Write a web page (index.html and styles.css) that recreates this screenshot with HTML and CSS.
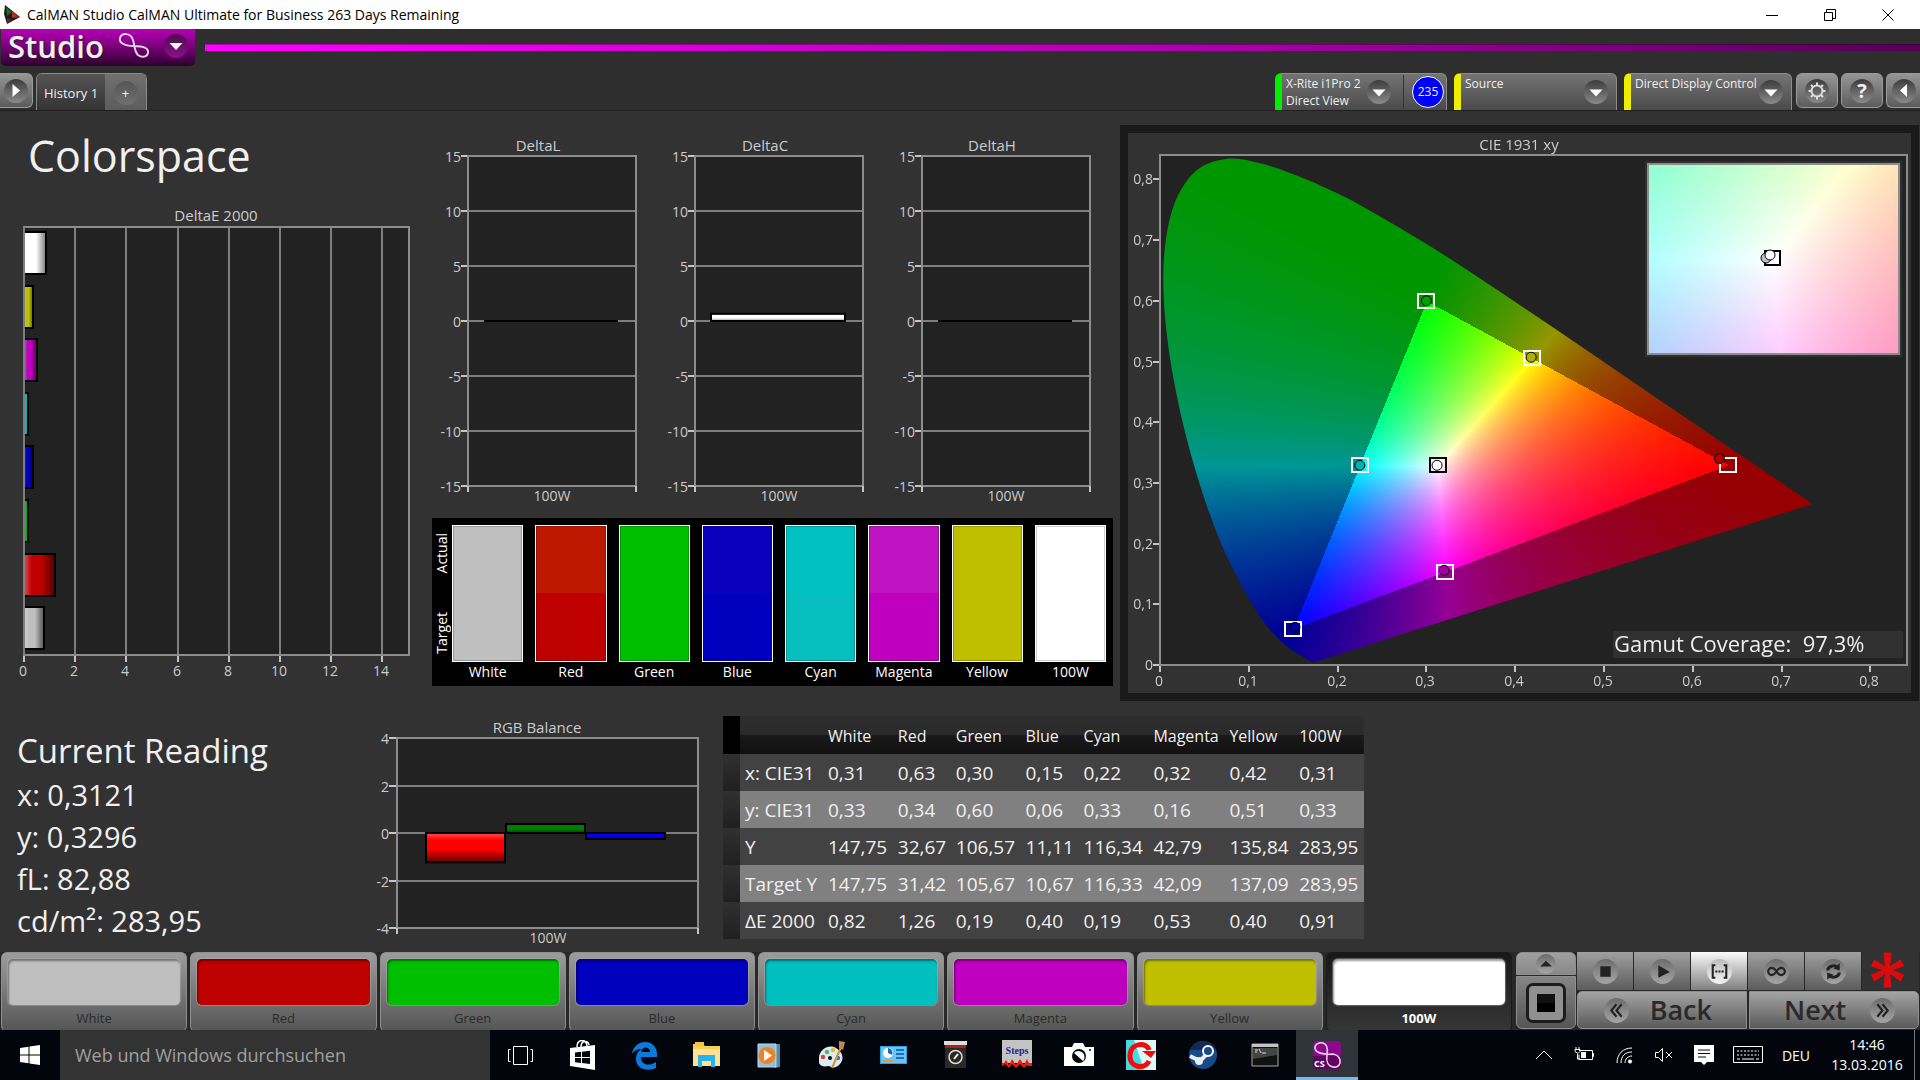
FILE: index.html
```html
<!DOCTYPE html>
<html lang="de">
<head>
  <meta charset="UTF-8">
  <meta name="viewport" content="width=device-width, initial-scale=1.0">
  <title>CalMAN Studio</title>
  <link rel="stylesheet" href="styles.css">
</head>
<body>
  <header class="titlebar">
    <svg class="app-icon" viewBox="0 0 18 20">
      <path d="M2 0 17 12 4 19 1 9z" fill="#1b1b1b"/>
      <path d="M3 2 9 7 4 11z" fill="#1d6b1d"/>
      <path d="M9 6 16 12 9 13z" fill="#c3261b"/>
      <path d="M4 13 9 15 4 18z" fill="#7c1c2c"/>
    </svg>
    <span class="caption">CalMAN Studio CalMAN Ultimate for Business 263 Days Remaining</span>
    <button class="win-btn" aria-label="Minimieren"><svg viewBox="0 0 12 12"><path d="M0 6.5h12"/></svg></button>
    <button class="win-btn" aria-label="Verkleinern"><svg viewBox="0 0 12 12"><path d="M.5 3.5h8v8h-8zM2.5 3.500v-3h9v9h-3"/></svg></button>
    <button class="win-btn" aria-label="Schließen"><svg viewBox="0 0 12 12"><path d="M.5.5l11 11M11.500.5l-11 11"/></svg></button>
  </header>

  <div class="brand-row">
    <button class="brand">
      <span>Studio</span>
      <svg class="brand-mark" viewBox="0 0 32 28"><path d="M16 14C5 14 1 10 2 6 4 0 13 1 15 8c2 6 1 11 5 15 4 3 9 2 10-2 1-5-5-7-14-7" /></svg>
      <svg class="round violet" viewBox="0 0 24 24"><path d="M5.500 9h13L12 16z"/></svg>
    </button>
    <div class="brand-line"></div>
  </div>

  <nav class="tab-row">
    <button class="edge-btn left" aria-label="Öffnen"><svg class="round" viewBox="0 0 24 24"><path d="M8.500 5 16 11.500 8.500 18z"/></svg></button>
    <div class="tabs">
      <button class="tab active">History 1</button>
      <button class="tab add" aria-label="Neu"><span>+</span></button>
    </div>
    <div class="spacer"></div>
    <div class="device meter">
      <button class="device-name">X-Rite i1Pro 2<br>Direct View</button>
      <svg class="round arrow" viewBox="0 0 24 24"><path d="M5.500 9.500h13L12 16.500z"/></svg>
      <button class="level"><span>235</span></button>
    </div>
    <div class="device source">
      <select class="device-name" aria-label="Source"><option>Source</option></select>
      <svg class="round arrow" viewBox="0 0 24 24"><path d="M5.500 9.500h13L12 16.500z"/></svg>
    </div>
    <div class="device display">
      <select class="device-name" aria-label="Display"><option>Direct Display Control</option></select>
      <svg class="round arrow" viewBox="0 0 24 24"><path d="M5.500 9.500h13L12 16.500z"/></svg>
    </div>
    <button class="edge-btn" aria-label="Einstellungen"><svg class="round gear" viewBox="0 0 24 24"><circle cx="12" cy="12" r="5.500"/><path d="M12 3.500v3M12 17.500v3M3.500 12h3M17.500 12h3M6 6l2 2M16 16l2 2M18 6l-2 2M8 16l-2 2"/></svg></button>
    <button class="edge-btn" aria-label="Hilfe"><span class="help">?</span></button>
    <button class="edge-btn right" aria-label="Einblenden"><svg class="round" viewBox="0 0 24 24"><path d="M15 5 8 11.500 15 18z"/></svg></button>
  </nav>

  <main class="work">
    <div class="top">
      <section class="col-left">
        <h1>Colorspace</h1>
        <svg class="chart" id="deltaE" viewBox="0 0 432 485"></svg>
      </section>
      <section class="col-mid">
        <div class="deltas">
          <svg class="chart delta" data-title="DeltaL" data-value="0" viewBox="0 0 227 388"></svg>
          <svg class="chart delta" data-title="DeltaC" data-value="0.65" viewBox="0 0 227 388"></svg>
          <svg class="chart delta" data-title="DeltaH" data-value="0" viewBox="0 0 227 388"></svg>
        </div>
        <div class="compare">
          <div class="side"><span>Actual</span><span>Target</span></div>
          <div class="patch"><div class="pair white"></div>White</div>
          <div class="patch"><div class="pair red"></div>Red</div>
          <div class="patch"><div class="pair green"></div>Green</div>
          <div class="patch"><div class="pair blue"></div>Blue</div>
          <div class="patch"><div class="pair cyan"></div>Cyan</div>
          <div class="patch"><div class="pair magenta"></div>Magenta</div>
          <div class="patch"><div class="pair yellow"></div>Yellow</div>
          <div class="patch"><div class="pair full"></div>100W</div>
        </div>
      </section>
      <section class="cie">
        <canvas id="gamut" width="783" height="560"></canvas>
        <svg class="chart" id="cie" viewBox="0 0 783 560"></svg>
      </section>
    </div>

    <div class="bottom">
      <section class="reading">
        <h2>Current Reading</h2>
        <p>x: 0,3121</p>
        <p>y: 0,3296</p>
        <p>fL: 82,88</p>
        <p>cd/m²: 283,95</p>
      </section>
      <svg class="chart" id="rgb" viewBox="0 0 340 234"></svg>
      <section class="values">
        <table>
          <thead>
            <tr><td class="grip"></td><td class="name"></td><th>White</th><th class="narrow">Red</th><th>Green</th><th class="narrow">Blue</th><th>Cyan</th><th class="wide">Magenta</th><th>Yellow</th><th>100W</th></tr>
          </thead>
          <tbody>
            <tr><td class="grip"></td><th>x: CIE31</th><td>0,31</td><td>0,63</td><td>0,30</td><td>0,15</td><td>0,22</td><td>0,32</td><td>0,42</td><td>0,31</td></tr>
            <tr><td class="grip"></td><th>y: CIE31</th><td>0,33</td><td>0,34</td><td>0,60</td><td>0,06</td><td>0,33</td><td>0,16</td><td>0,51</td><td>0,33</td></tr>
            <tr><td class="grip"></td><th>Y</th><td>147,75</td><td>32,67</td><td>106,57</td><td>11,11</td><td>116,34</td><td>42,79</td><td>135,84</td><td>283,95</td></tr>
            <tr><td class="grip"></td><th>Target Y</th><td>147,75</td><td>31,42</td><td>105,67</td><td>10,67</td><td>116,33</td><td>42,09</td><td>137,09</td><td>283,95</td></tr>
            <tr><td class="grip"></td><th>ΔE 2000</th><td>0,82</td><td>1,26</td><td>0,19</td><td>0,40</td><td>0,19</td><td>0,53</td><td>0,40</td><td>0,91</td></tr>
          </tbody>
        </table>
      </section>
    </div>
  </main>

  <div class="dock">
    <div class="colors">
      <button class="color"><span class="well white"></span>White</button>
      <button class="color"><span class="well red"></span>Red</button>
      <button class="color"><span class="well green"></span>Green</button>
      <button class="color"><span class="well blue"></span>Blue</button>
      <button class="color"><span class="well cyan"></span>Cyan</button>
      <button class="color"><span class="well magenta"></span>Magenta</button>
      <button class="color"><span class="well yellow"></span>Yellow</button>
      <button class="color active"><span class="well full"></span>100W</button>
    </div>
    <div class="pattern">
      <button class="up" aria-label="Auf"><svg class="disc" viewBox="0 0 24 24"><path d="M5 15h14L12 8z"/></svg></button>
      <button class="window" aria-label="Fenster"><span></span></button>
    </div>
    <div class="controls">
      <div class="transport">
        <button aria-label="Stopp"><svg class="disc" viewBox="0 0 24 24"><path d="M7 7h10v10H7z"/></svg></button>
        <button aria-label="Start"><svg class="disc" viewBox="0 0 24 24"><path d="M8 6 19 12.500 8 18z"/></svg></button>
        <button class="active" aria-label="Serie"><svg class="disc" viewBox="0 0 24 24"><path class="stroke" d="M8 6H5.500v12H8M16 6h2.500v12H16"/><path d="M8 11h2v2H8zM11 11h2v2h-2zM14 11h2v2h-2z"/></svg></button>
        <button aria-label="Endlos"><svg class="disc" viewBox="0 0 24 24"><path class="stroke" d="M12 12c-2-3-3-3.500-4.500-3.500a3.500 3.500 0 0 0 0 7C9 15.500 10 15 12 12s3-3.500 4.500-3.500a3.500 3.500 0 0 1 0 7C15 15.500 14 15 12 12z"/></svg></button>
        <button aria-label="Aktualisieren"><svg class="disc" viewBox="0 0 24 24"><path class="stroke thick" d="M6.500 11c0-4 6-6 9.500-3M17.500 13c0 4-6 6-9.500 3"/><path d="M18 4v7l-6-2zM6 20v-7l6 2z"/></svg></button>
        <svg class="star" viewBox="0 0 34 38"><path d="M13.500 1h7L19 15l11-7 3 6-12 4 12 5-3 6-11-8 1.500 14h-7L15 21 4 29l-3-6 12-5L1 14l3-6 11 7z"/></svg>
      </div>
      <div class="steps">
        <button><svg class="disc" viewBox="0 0 24 24"><path class="stroke" d="M12 6 7 12l5 6M17 6l-5 6 5 6"/></svg>Back</button>
        <button>Next<svg class="disc" viewBox="0 0 24 24"><path class="stroke" d="M7 6l5 6-5 6M12 6l5 6-5 6"/></svg></button>
      </div>
    </div>
  </div>

  <footer class="taskbar">
    <button class="start" aria-label="Start"><svg viewBox="0 0 20 20"><path d="M0 3 8.500 1.800V9.500H0zM9.500 1.600 20 0v9.500H9.500zM0 10.500h8.500v7.700L0 17zM9.500 10.500H20V20L9.500 18.400z" fill="#fff"/></svg></button>
    <input class="search" type="text" aria-label="Suche" placeholder="Web und Windows durchsuchen">
    <div class="apps">
      <button aria-label="Taskansicht"><svg viewBox="0 0 30 30"><path d="M7.500 6.500h14v18h-14zM4.500 9.500h-2v12h2M24.500 9.500h2v12h-2" fill="none" stroke="#fff"/></svg></button>
      <button aria-label="Store"><svg viewBox="0 0 30 30"><path d="M2 8 27 5v25L2 26z" fill="#fff"/><path d="M9 7c0-8 9-9 10-1M13 7c0-7 7-7 8-2" fill="none" stroke="#fff" stroke-width="1.500"/><path d="M7 12.500l6-.7V17H7zM14 11.700l8-1V17h-8zM7 18h6v5l-6-.7zM14 18h8v6l-8-1z" fill="#05070c"/></svg></button>
      <button aria-label="Edge"><svg viewBox="0 0 30 30"><path d="M2 14C3 6 9 2 15 2c8 0 12 6 12 12v3H11c0 9 9 9 15 5v6c-9 4-20 1-20-9 0-5 2-8 6-10-5 0-8 2-10 5zM11 12h9c0-6-8-6-9 0z" fill="#0a7bdc"/></svg></button>
      <button aria-label="Explorer"><svg viewBox="0 0 30 30"><path d="M1 4h10l2 2h15v20H1z" fill="#f7cf55"/><path d="M1 9h27v17H1z" fill="#ffe293"/><path d="M3 2h9v4H3z" fill="#f4c23e"/><path d="M6 27V15h17v12h-4v-6h-9v6z" fill="#27b3ec"/></svg></button>
      <button aria-label="Media Player"><svg viewBox="0 0 30 30"><path d="M9 4h17v23l-5 1V6z" fill="#4f8aa8"/><path d="M4 4h18v23H4z" fill="#8fc0dc"/><path d="M4 4h18v23H4z" fill="none" stroke="#b9dcec"/><circle cx="13" cy="15.500" r="8.500" fill="#f08020"/><path d="M10 10l8 5.500-8 5.500z" fill="#fff"/></svg></button>
      <button aria-label="Paint"><svg viewBox="0 0 30 30"><path d="M3 17C4 9 13 4 20 8s9 12 3 17-9 1-10 1-8 2-10-3z" fill="#d8ebf6"/><circle cx="7" cy="17" r="2.200" fill="#d9482b"/><circle cx="11" cy="12" r="2.200" fill="#63b545"/><circle cx="17" cy="10" r="2.200" fill="#efb62c"/><circle cx="22" cy="18" r="2.200" fill="#3a77cf"/><circle cx="14" cy="18" r="2" fill="#0a1220"/><path d="M26 5 16 28" stroke="#e28b2d" stroke-width="2"/><path d="M23 1l6 1-2 8-4-2z" fill="#b98a5c"/></svg></button>
      <button aria-label="Systemsteuerung"><svg viewBox="0 0 30 30"><path d="M2 6h27v18H2z" fill="#2e9fe6"/><path d="M3 7h25v16H3z" fill="#6cc4f5"/><circle cx="10" cy="13" r="5" fill="#fff"/><path d="M10 13V8a5 5 0 0 1 4 7z" fill="#1d66b8"/><path d="M18 9h8v2h-8zM18 13h8v2h-8zM18 17h8v2h-8z" fill="#1970bd"/><path d="M5 20h10v2H5z" fill="#f09a26"/></svg></button>
      <button aria-label="Messgerät"><svg viewBox="0 0 30 30"><path d="M4 1h23v4H4z" fill="#ddd"/><path d="M5 5h21v3H5z" fill="#aa2020"/><path d="M5 8h21v20H5z" fill="#2c2826"/><circle cx="15.500" cy="17" r="6.500" fill="none" stroke="#ddd" stroke-width="1.500"/><path d="M14 19l4-5" stroke="#fff" stroke-width="2"/></svg></button>
      <button aria-label="Steps"><svg viewBox="0 0 30 30"><path d="M0 0h30v30H0z" fill="#c3c3c3"/><path d="M0 23h30v7H0z"/><path d="M0 23h2l2-3 3 5 3-6 4 6 4-6 4 6 3-6 2 4h3v3h-4l-1-1-3 3-4-4-4 4-4-4-3 4-4-4-2 2H0z" fill="#f21d0c"/><text x="15" y="14" text-anchor="middle" class="steps-text">Steps</text></svg></button>
      <button aria-label="Kamera"><svg viewBox="0 0 30 30"><path d="M0 7h8l2-4h9l2 4h9v19H0z" fill="#fff"/><ellipse cx="15" cy="16" rx="7" ry="7" fill="#05070c"/><path d="M10 13a6 6 0 0 1 9 8z" fill="#fff"/><circle cx="26" cy="10" r="1" fill="#05070c"/></svg></button>
      <button aria-label="Capture"><svg viewBox="0 0 30 30"><path d="M0 0h30v30H0z" fill="#48d8e0"/><path d="M8 0h22v30H18z" fill="#dff8f8"/><path d="M23 10C21 2 5 2 4 15s15 15 19 6" fill="none" stroke="#f20d0d" stroke-width="5"/><path d="M16 11h14l-5 7z" fill="#f20d0d"/></svg></button>
      <button aria-label="Steam"><svg viewBox="0 0 30 30"><circle cx="15" cy="15" r="14" fill="#174a86"/><path d="M2 10a14 14 0 0 1 26 0z" fill="#152a52"/><path d="M2 16l10 5 8-8" fill="none" stroke="#e9eef5" stroke-width="4"/><circle cx="20" cy="11" r="5" fill="#174a86" stroke="#fff" stroke-width="2"/><circle cx="11" cy="21" r="4" fill="#e9eef5"/></svg></button>
      <button aria-label="Eingabeaufforderung"><svg viewBox="0 0 30 30"><path d="M2 4h26v22H2z" fill="#111" stroke="#aaa"/><path d="M2 4h26v3H2z" fill="#c4c4c4"/><path d="M3 8h24v7L3 19z" fill="#444"/><path d="M5 10h3M5 12h2M9 9l2 4M12 13h4" stroke="#ddd"/></svg></button>
      <button class="active" aria-label="CalMAN"><svg viewBox="0 0 30 30"><rect x="1" y="1" width="28" height="28" rx="4" fill="#8b0a8b"/><path d="M1 16h28v9a4 4 0 0 1-4 4H5a4 4 0 0 1-4-4z" fill="#5f055f"/><path d="M22 14C9 15 3 12 3 8s4-6 8-5 5 6 4 12 1 11 6 12 8-3 7-7-5-6-9-6" fill="none" stroke="#f0d0f0" stroke-width="1.600"/><text x="2" y="27" class="cs-text">CS</text></svg></button>
    </div>
    <div class="tray">
      <button aria-label="Weitere Symbole"><svg viewBox="0 0 20 20"><path d="M2 14 10 6l8 8"/></svg></button>
      <button aria-label="Akku"><svg viewBox="0 0 20 20"><path d="M5 5.500h13.500v9H5v-5M18.500 8.500h1v3h-1M1 4.500h5v2l-2 2-3-2zM2 2v2M5 2v2M3.500 9v5H6"/><path d="M7 7h5v6H7z" fill="#fff" stroke="none"/></svg></button>
      <button aria-label="Netzwerk"><svg viewBox="0 0 20 20"><path d="M3 18C3 9 9 3 18 3M7 18C7 11 11 7 18 7M11 18c0-4 3-7 7-7" /><circle cx="16" cy="16.500" r="1.600" fill="#fff"/></svg></button>
      <button aria-label="Lautstärke"><svg viewBox="0 0 20 20"><path d="M1.500 7.500h3l4-4v13l-4-4h-3zM12 7l6 6M18 7l-6 6"/></svg></button>
      <button aria-label="Info"><svg viewBox="0 0 20 20"><path d="M0 0h20v17h-7l-3 3-3-3H0z" fill="#fff" stroke="none"/><path d="M4 5h12M4 8.500h12M4 12h8" stroke="#05070c"/></svg></button>
      <button class="keyboard" aria-label="Tastatur"><svg viewBox="0 0 30 18"><path d="M.5.5h29v16H.5z"/><path d="M4 5h22M4 9h22" stroke-dasharray="2 1.500"/><path d="M4 13h3M9 13h12M23 13h3"/></svg></button>
      <button class="lang">DEU</button>
      <button class="clock">14:46<br>13.03.2016</button>
    </div>
  </footer>

  <script src="script.js"></script>
</body>
</html>
```
FILE: styles.css
```css
* {
  box-sizing: border-box;
}
body {
  margin: 0;
  min-height: 100vh;
  display: flex;
  flex-direction: column;
  background: #2e2e2e;
  color: #f0f0f0;
  font-family: "Open Sans", "Noto Sans", sans-serif;
  font-size: 14px;
  overflow-x: hidden;
}
button, select, input {
  font: inherit;
  color: inherit;
  border: 0;
  padding: 0;
  margin: 0;
  background: none;
}
svg {
  display: block;
}
h1, h2, p {
  margin: 0;
  font-weight: 400;
}

/* title bar */
.titlebar {
  height: 29px;
  padding-right: 3px;
  display: flex;
  align-items: center;
  background: #fff;
  color: #000;
}
.app-icon {
  width: 18px;
  height: 20px;
  margin: 0 6px 0 3px;
}
.caption {
  flex: 1;
  font-size: 14px;
}
.win-btn {
  width: 58px;
  height: 29px;
  display: grid;
  place-items: center;
}
.win-btn svg {
  width: 12px;
  height: 12px;
  fill: none;
  stroke: #000;
}

/* brand */
.brand-row {
  height: 44px;
  display: flex;
  align-items: flex-start;
}
.brand {
  width: 194px;
  height: 37px;
  margin-left: 1px;
  padding: 0 7px 3px;
  display: flex;
  align-items: center;
  justify-content: space-between;
  border-radius: 0 0 5px 5px;
  background: linear-gradient(#b400b4, #8c008c 35%, #2c002c);
  font-size: 31px;
  font-weight: 600;
  line-height: 34px;
  text-shadow: 1px 1px 2px #222;
}
.brand-mark {
  width: 32px;
  height: 28px;
  fill: none;
  stroke: #e4d4e4;
  stroke-width: 2;
}
.brand-line {
  flex: 1;
  height: 7px;
  margin: 15px 0 0 10px;
  background: linear-gradient(90deg, #ff00ff, #a800a8 60%, #550055);
  border-top: 1px solid rgba(0, 0, 0, .3);
}
.round {
  width: 24px;
  height: 24px;
  border-radius: 50%;
  background: linear-gradient(#3c3c3c, #8a8a8a);
  fill: #fff;
}
.round.violet {
  background: linear-gradient(#4a0c4a, #8f0f8f);
}

/* tabs and devices */
.tab-row {
  height: 38px;
  display: flex;
  align-items: flex-start;
  gap: 3px;
  border-bottom: 1px solid #202020;
}
.edge-btn {
  width: 42px;
  height: 35px;
  display: grid;
  place-items: center;
  border: 1px solid #9a9a9a;
  border-radius: 6px;
  background: linear-gradient(#969696, #5c5c5c);
}
.edge-btn.left {
  width: 33px;
  border-left: 0;
  border-radius: 0 6px 6px 0;
}
.edge-btn.right {
  width: 34px;
  border-right: 0;
  border-radius: 6px 0 0 6px;
}
.round.gear {
  fill: none;
  stroke: #ddd;
  stroke-width: 2;
}
.help {
  width: 24px;
  height: 24px;
  border-radius: 50%;
  background: linear-gradient(#3c3c3c, #8a8a8a);
  font-size: 20px;
  font-weight: 700;
  line-height: 24px;
}
.tabs {
  display: flex;
  height: 37px;
  border: 1px solid #8a8a8a;
  border-bottom: 0;
  border-radius: 6px 6px 0 0;
  overflow: hidden;
}
.tab {
  width: 68px;
  padding-top: 2px;
  font-size: 13px;
  background: linear-gradient(#555, #333);
}
.tab.add {
  width: 41px;
  display: grid;
  place-items: center;
  background: linear-gradient(#707070, #5c5c5c);
}
.tab.add span {
  width: 24px;
  height: 24px;
  line-height: 24px;
  border-radius: 50%;
  background: linear-gradient(#555, #707070);
}
.spacer {
  flex: 1;
}
.device {
  height: 37px;
  width: 163px;
  margin-right: 4px;
  display: flex;
  align-items: center;
  border: 1px solid #8c8c8c;
  border-left: 7px solid #ee0;
  border-bottom: 0;
  border-radius: 6px 6px 0 0;
  background: linear-gradient(#747474, #4a4a4a);
  font-size: 12px;
}
.device.meter {
  width: 172px;
  border-left-color: #0e0;
}
.device.display {
  width: 168px;
  margin-right: 1px;
}
.device-name {
  flex: 1;
  align-self: stretch;
  min-width: 0;
  padding: 0 0 0 4px;
  line-height: 17px;
  text-align: left;
  appearance: none;
}
select.device-name {
  padding: 0 0 17px 4px;
}
.device .arrow {
  margin-right: 8px;
  flex: none;
}
.device.meter .arrow {
  margin-right: 12px;
}
.level {
  height: 34px;
  padding: 0 2px 0 8px;
  border-left: 1px solid #333;
}
.level span {
  display: block;
  width: 32px;
  height: 32px;
  line-height: 29px;
  border: 1px solid #fff;
  border-radius: 50%;
  background: #00f;
}

/* workspace */
.work {
  flex: 1;
  display: flex;
  flex-direction: column;
  background: #323232;
}
.top {
  display: grid;
  grid-template-columns: 432fr 681fr 807fr;
  align-items: start;
}
h1 {
  padding: 15px 0 19px 28px;
  font-size: 43px;
  line-height: 60px;
}
.chart {
  width: 100%;
  height: auto;
}
.deltas {
  display: grid;
  grid-template-columns: repeat(3, 1fr);
  margin-top: 19px;
}
.frame {
  fill: #222;
  stroke: #8c8c8c;
  stroke-width: 2;
}
.frame.clear {
  fill: none;
}
.grid-line {
  stroke: #7e7e7e;
  stroke-width: 2;
}
.tick {
  stroke: #c4c4c4;
  stroke-width: 2;
}
.frame, .grid-line, .tick {
  shape-rendering: crispEdges;
}
.bar {
  stroke: #000;
  stroke-width: 2;
}
.label, .title {
  fill: #ccc;
  font-size: 14px;
}
.title {
  font-size: 15px;
}
.target {
  fill: none;
  stroke: #fff;
  stroke-width: 2;
}
.target.dark {
  stroke: #000;
}
.measured {
  stroke: #000;
  stroke-width: 1;
}
.coverage {
  fill: #eee;
  font-size: 22px;
}

.compare {
  display: grid;
  grid-template-columns: 8px repeat(8, 1fr);
  gap: 12px;
  padding: 7px 7px 5px 0;
  background: #000;
  color: #fff;
}
.side {
  width: 20px;
  height: 137px;
  padding: 8px 0;
  display: flex;
  flex-direction: column;
  justify-content: space-between;
  align-items: center;
}
.side span {
  writing-mode: vertical-rl;
  transform: rotate(180deg);
  line-height: 20px;
}
.patch {
  text-align: center;
  line-height: 19px;
}
.pair {
  height: 137px;
  border: 1px solid #fff;
  outline: 1px solid rgba(0, 0, 0, .2);
  outline-offset: -2px;
}
.white { background: #bfbfbf; }
.red { background: #bf0000; }
.green { background: #00bf00; }
.blue { background: #0000bf; }
.cyan { background: #00bfbf; }
.magenta { background: #bf00bf; }
.yellow { background: #bfbf00; }
.full { background: #fff; }
.pair.white { background: linear-gradient(#bebfbe 50%, #bfbfbf 50%); }
.pair.red { background: linear-gradient(#bf1800 50%, #bf0000 50%); }
.pair.blue { background: linear-gradient(#0c00bf 50%, #0000bf 50%); }
.pair.cyan { background: linear-gradient(#00c0c0 50%, #08bfc0 50%); }
.pair.magenta { background: linear-gradient(#bf12c0 50%, #bf00bf 50%); }

.cie {
  margin: 14px 1px 0 7px;
  display: grid;
  border: 8px solid #1a1a1a;
}
.cie canvas, .cie svg {
  grid-area: 1 / 1;
  width: 100%;
  height: auto;
}

.bottom {
  display: grid;
  grid-template-columns: 370fr 340fr 1210fr;
  align-items: start;
}
.bottom .chart {
  margin-top: 17px;
}
.reading {
  padding: 26px 0 0 17px;
}
.reading h2 {
  font-size: 33px;
  line-height: 47px;
}
.reading p {
  font-size: 29px;
  line-height: 42px;
}
.values {
  padding: 15px 0 0 13px;
}
table {
  table-layout: fixed;
  border-collapse: collapse;
  width: 641px;
}
th, td {
  padding: 0 0 0 5px;
  height: 37px;
  font-weight: 400;
  font-size: 19px;
  line-height: 24px;
  text-align: left;
  white-space: nowrap;
}
thead tr {
  background: linear-gradient(#2e2e2e, #2a2a2a 50%, #191919 50%, #111);
}
thead th {
  height: 38px;
  padding-top: 2px;
  font-size: 16px;
}
.grip {
  width: 17px;
  padding: 0;
  background: linear-gradient(#303030, #202020);
}
thead .grip {
  background: #000;
}
.name {
  width: 83px;
}
.narrow {
  width: 58px;
}
.wide {
  width: 76px;
}
tbody tr {
  background: #424242;
}
tbody tr:nth-child(even) {
  background: #808080;
}

/* pattern dock */
.dock {
  height: 78px;
  display: flex;
  gap: 1px;
  padding-right: 1px;
  background: #282828;
  color: #2a2a2a;
}
.colors {
  flex: 1;
  display: grid;
  grid-template-columns: repeat(8, 1fr);
  gap: 3px;
  padding: 0 3px 1px 1px;
}
.color {
  padding: 6px 6px 0;
  border: 1px solid #8f8f8f;
  border-bottom-color: #444;
  border-radius: 6px;
  background: linear-gradient(#9c9c9c, #555);
  font-size: 13px;
  display: flex;
  flex-direction: column;
  align-items: center;
  line-height: 26px;
}
.color.active {
  border-color: #1a1a1a;
  background: linear-gradient(#181818, #363636);
  color: #fff;
  font-weight: 700;
}
.well {
  align-self: stretch;
  height: 46px;
  border-radius: 5px;
  box-shadow: inset 1px 2px 2px rgba(0, 0, 0, .4), 0 0 1px 1px rgba(190, 190, 190, .4);
}
.pattern {
  width: 60px;
  display: flex;
  flex-direction: column;
  gap: 1px;
  padding-bottom: 1px;
}
.up, .window {
  display: grid;
  place-items: center;
  border: 1px solid #8f8f8f;
}
.up {
  height: 23px;
  border-radius: 6px 6px 0 0;
  background: linear-gradient(#a0a0a0, #888);
}
.up .disc {
  width: 20px;
  height: 20px;
}
.window {
  flex: 1;
  border-radius: 0 0 6px 6px;
  background: linear-gradient(#858585, #555);
}
.window span {
  width: 40px;
  height: 40px;
  border: 3px solid #1c1c1c;
  border-radius: 7px;
  background: linear-gradient(#111 50%, #000 50%) center / 18px 18px no-repeat, #909090;
}
.disc {
  width: 25px;
  height: 25px;
  border-radius: 50%;
  background: linear-gradient(#6c6c6c, #a6a6a6);
  fill: #222;
}
.stroke {
  fill: none;
  stroke: #222;
  stroke-width: 2;
}
.stroke.thick {
  stroke-width: 3;
}
.controls {
  width: 342px;
  display: flex;
  flex-direction: column;
  gap: 1px;
  padding-bottom: 1px;
}
.transport {
  height: 38px;
  display: flex;
  gap: 1px;
}
.transport button {
  width: 56px;
  display: grid;
  place-items: center;
  background: linear-gradient(#a0a0a0, #5c5c5c);
}
.transport .active {
  background: linear-gradient(#fafafa, #808080);
}
.transport .active .disc {
  background: linear-gradient(#bbb, #f4f4f4);
}
.star {
  flex: 1;
  height: 38px;
  padding-right: 6px;
  fill: #dc0a0a;
  stroke: #dc0a0a;
  background: #323232;
}
.steps {
  flex: 1;
  display: grid;
  grid-template-columns: 1fr 1fr;
  gap: 2px;
}
.steps button {
  display: flex;
  align-items: center;
  justify-content: space-between;
  padding: 0 34px 0 26px;
  border: 1px solid #8f8f8f;
  border-radius: 5px 0 0 5px;
  background: linear-gradient(#a4a4a4, #5a5a5a);
  font-size: 27px;
  font-weight: 600;
  line-height: 34px;
}
.steps button:last-child {
  padding: 0 23px 0 34px;
  border-radius: 0 5px 5px 0;
}

/* taskbar */
.taskbar {
  height: 50px;
  display: flex;
  background: #02050b;
  color: #fff;
}
.start {
  width: 60px;
  display: grid;
  place-items: center;
}
.start svg {
  width: 20px;
  height: 20px;
}
.search {
  width: 430px;
  padding: 0 15px;
  background: #333;
  font-size: 18px;
}
.search::placeholder {
  color: #a0a0a0;
  opacity: 1;
}
.apps {
  flex: 1;
  display: flex;
}
.apps button {
  width: 62px;
  display: grid;
  place-items: center;
}
.apps svg {
  width: 30px;
  height: 30px;
}
.apps .active {
  background: #2f3439;
  border-bottom: 3px solid #76b9ed;
  padding-top: 3px;
}
.steps-text {
  font: 700 10px "Liberation Serif", serif;
  fill: #2020a0;
}
.cs-text {
  font-size: 9px;
  font-weight: 700;
  fill: #fff;
}
.tray {
  display: flex;
  margin-right: 5px;
  border-right: 1px solid #777;
}
.tray button {
  width: 40px;
  display: grid;
  place-items: center;
}
.tray svg {
  width: 20px;
  height: 20px;
  fill: none;
  stroke: #fff;
  stroke-width: 1;
}
.tray .keyboard {
  width: 48px;
}
.tray .keyboard svg {
  width: 30px;
  height: 18px;
}
.tray .lang {
  width: 48px;
}
.tray .clock {
  width: 94px;
  line-height: 20px;
}
```
FILE: script.js
```js
const $ = s => document.querySelector(s)
const $$ = s => document.querySelectorAll(s)
const NS = 'http://www.w3.org/2000/svg'

function add(parent, tag, attrs, text) {
  const node = document.createElementNS(NS, tag)
  for (const key in attrs) node.setAttribute(key, attrs[key])
  if (text !== undefined) node.textContent = text
  parent.appendChild(node)
  return node
}
function line(svg, cls, x1, y1, x2, y2) {
  add(svg, 'line', { class: cls, x1, y1, x2, y2 })
}
function label(svg, x, y, text, anchor = 'middle', cls = 'label') {
  add(svg, 'text', { class: cls, x, y, 'text-anchor': anchor }, text)
}
function frame(svg, x, y, width, height, cls = 'frame') {
  add(svg, 'rect', { class: cls, x, y, width, height })
}
// bar shading: light edge, flat colour, dark edge
function shade(svg, id, mid, light, dark, vertical) {
  const g = add(svg, 'linearGradient', vertical ? { id, x2: 0, y2: 1 } : { id })
  add(g, 'stop', { offset: 0, 'stop-color': light })
  add(g, 'stop', { offset: .25, 'stop-color': mid })
  add(g, 'stop', { offset: .55, 'stop-color': mid })
  add(g, 'stop', { offset: 1, 'stop-color': dark })
}

function drawDeltaE(svg) {
  const left = 24, top = 22, right = 409, bottom = 450, unit = 25.6
  const rows = [
    [0.91, '#ffffff', '#ffffff', '#777777'],
    [0.40, '#bfbf00', '#d0d040', '#5a5a00'],
    [0.53, '#bf00bf', '#d850d8', '#500050'],
    [0.19, '#00bfbf', '#40d0d0', '#009090'],
    [0.40, '#0000bf', '#4040d8', '#000050'],
    [0.19, '#00bf00', '#40d040', '#009000'],
    [1.26, '#bf0000', '#e05050', '#500000'],
    [0.82, '#bfbfbf', '#d0d0d0', '#505050']
  ]
  label(svg, 216, 16, 'DeltaE 2000', 'middle', 'title')
  frame(svg, left, top, right - left, bottom - top)
  for (let v = 0; v <= 14; v += 2) {
    const x = Math.round(left + v * unit)
    if (v) line(svg, 'grid-line', x, top + 1, x, bottom - 1)
    line(svg, 'tick', x, bottom + 1, x, bottom + 7)
    label(svg, x - 1, bottom + 21, v)
  }
  rows.forEach(([value, mid, light, dark], i) => {
    shade(svg, 'de' + i, mid, light, dark)
    add(svg, 'rect', { class: 'bar', x: left, y: top + 5 + Math.round(i * 53.6), width: Math.round(value * unit - 1), height: 42, fill: `url(#de${i})` })
  })
  line(svg, 'grid-line', left, top, left, bottom)
}

function drawDelta(svg) {
  const left = 36, right = 204, top = 26, bottom = 356, zero = 191, value = +svg.dataset.value
  label(svg, 106, 21, svg.dataset.title, 'middle', 'title')
  frame(svg, left, top, right - left, bottom - top)
  for (let v = -15; v <= 15; v += 5) {
    const y = zero - v * 11
    if (Math.abs(v) < 15) line(svg, 'grid-line', left + 1, y, right - 1, y)
    line(svg, 'tick', left - 7, y, left - 1, y)
    label(svg, left - 7, y + 6, v, 'end')
  }
  line(svg, 'tick', left, bottom, left, bottom + 6)
  line(svg, 'tick', right, bottom, right, bottom + 6)
  if (value) {
    const h = value * 11
    shade(svg, 'white' + svg.dataset.title, '#ffffff', '#ffffff', '#999999', true)
    add(svg, 'rect', { class: 'bar', x: 52, y: zero - h, width: 134, height: h, fill: `url(#white${svg.dataset.title})` })
  } else {
    add(svg, 'rect', { x: 52, y: zero - 1, width: 134, height: 2 })
  }
  label(svg, 120, 371, '100W')
}

function drawRgb(svg) {
  const left = 27, right = 328, top = 20, bottom = 210, zero = 115, unit = 24
  label(svg, 167, 15, 'RGB Balance', 'middle', 'title')
  frame(svg, left, top, right - left, bottom - top)
  for (let v = -4; v <= 4; v += 2) {
    const y = Math.round(zero - v * 23.75)
    if (Math.abs(v) < 4) line(svg, 'grid-line', left + 1, y, right - 1, y)
    line(svg, 'tick', left - 8, y, left - 1, y)
    label(svg, left - 8, y + 6, v, 'end')
  }
  line(svg, 'tick', left, bottom, left, bottom + 6)
  line(svg, 'tick', right, bottom, right, bottom + 6)
  const bars = [[-1.22, '#ff0000', '#ff5050', '#600000'], [.37, '#008000', '#208c20', '#004000'], [-.25, '#0000ff', '#3030ff', '#000080']]
  bars.forEach(([v, mid, light, dark], i) => {
    shade(svg, 'rgb' + i, mid, light, dark, true)
    const h = Math.abs(v) * unit
    add(svg, 'rect', { class: 'bar', x: 56 + i * 80, y: v > 0 ? zero - h : zero, width: 79, height: h, fill: `url(#rgb${i})` })
  })
  label(svg, 178, 225, '100W')
}

// CIE 1931 chromaticity plot
const plot = { left: 32, top: 22, right: 779, bottom: 532, sx: 888, sy: 607 }
const px = x => plot.left + x * plot.sx
const py = y => plot.bottom - y * plot.sy
const inset = { x: 520, y: 31, w: 251, h: 190, range: .045 }
const white = { x: .3127, y: .329 }
const locus = [
  [.1741, .0050], [.1714, .0051], [.1644, .0109], [.1566, .0177], [.1440, .0297], [.1241, .0578],
  [.1096, .0868], [.0913, .1327], [.0687, .2007], [.0454, .2950], [.0235, .4127], [.0082, .5384],
  [.0039, .6548], [.0139, .7502], [.0389, .8120], [.0743, .8338], [.1142, .8262], [.1547, .8059],
  [.1929, .7816], [.2296, .7543], [.3016, .6923], [.3731, .6245], [.4441, .5547], [.5125, .4866],
  [.5752, .4242], [.6270, .3725], [.6658, .3340], [.6915, .3083], [.7190, .2809], [.7347, .2653]
]

// chromaticity to display colour, dimmed outside of the Rec.709 triangle
function xyToRgb(x, y) {
  y = Math.max(y, .001)
  const X = x / y, Z = (1 - x - y) / y
  const rgb = [
    3.2406 * X - 1.5372 - .4986 * Z,
    -.9689 * X + 1.8758 + .0415 * Z,
    .0557 * X - .2040 + 1.0570 * Z
  ]
  const level = rgb.every(c => c >= 0) ? 255 : 150
  const max = Math.max(...rgb)
  return rgb.map(c => level * Math.max(c, 0) / max)
}
function paint(width, height, toXy) {
  const c = document.createElement('canvas')
  c.width = width
  c.height = height
  const ctx = c.getContext('2d')
  const img = ctx.createImageData(width, height)
  for (let j = 0; j < height; j++) {
    for (let i = 0; i < width; i++) {
      img.data.set([...xyToRgb(...toXy(i, j)), 255], (j * width + i) * 4)
    }
  }
  ctx.putImageData(img, 0, 0)
  return c
}

function drawGamut(canvas) {
  const ctx = canvas.getContext('2d')
  ctx.fillStyle = '#222'
  ctx.fillRect(plot.left, plot.top, plot.right - plot.left, plot.bottom - plot.top)
  ctx.save()
  ctx.beginPath()
  const pts = locus.map(([x, y]) => [px(x), py(y)])
  ctx.moveTo(...pts[0])
  for (let i = 0; i < pts.length - 1; i++) {
    const a = pts[Math.max(i - 1, 0)], b = pts[i], c = pts[i + 1], d = pts[Math.min(i + 2, pts.length - 1)]
    ctx.bezierCurveTo(b[0] + (c[0] - a[0]) / 6, b[1] + (c[1] - a[1]) / 6, c[0] - (d[0] - b[0]) / 6, c[1] - (d[1] - b[1]) / 6, c[0], c[1])
  }
  ctx.closePath()
  ctx.clip()
  ctx.drawImage(paint(canvas.width, canvas.height, (i, j) => [(i - plot.left) / plot.sx, (plot.bottom - j) / plot.sy]), 0, 0)
  ctx.restore()
  ctx.fillStyle = '#303030'
  ctx.fillRect(inset.x - 3, inset.y - 3, inset.w + 6, inset.h + 6)
  ctx.drawImage(paint(inset.w, inset.h, (i, j) => [white.x + (i / inset.w - .5) * inset.range, white.y - (j / inset.h - .5) * inset.range]), inset.x, inset.y)
}

function drawCie(svg) {
  label(svg, 391, 17, 'CIE 1931 xy', 'middle', 'title')
  frame(svg, plot.left, plot.top, plot.right - plot.left, plot.bottom - plot.top, 'frame clear')
  for (let n = 0; n <= 8; n++) {
    const text = n ? '0,' + n : '0', x = Math.round(px(n / 10)), y = Math.round(py(n / 10))
    line(svg, 'tick', x, plot.bottom + 1, x, plot.bottom + 7)
    label(svg, x - 1, plot.bottom + 21, text)
    line(svg, 'tick', plot.left - 7, y, plot.left - 1, y)
    label(svg, plot.left - 7, y + 5, text, 'end')
  }
  const marks = [
    [.3, .6, .3, .6, '#00a000'], [.419, .505, .418, .507, '#b0b000'], [.64, .33, .63, .34, '#b00000'],
    [.225, .329, .225, .329, '#00b0b0'], [.321, .154, .32, .156, '#a000a0'], [.15, .06, .152, .062, '#0000a0'],
    [.3127, .329, .312, .329, '#ffffff']
  ]
  marks.forEach(([tx, ty, mx, my, fill]) => {
    const dark = fill === '#ffffff' ? ' dark' : ''
    add(svg, 'rect', { class: 'target' + dark, x: Math.round(px(tx)) - 8, y: Math.round(py(ty)) - 7, width: 16, height: 14 })
    add(svg, 'circle', { class: 'measured', cx: px(mx), cy: py(my), r: 5, fill })
  })
  frame(svg, inset.x, inset.y, inset.w, inset.h, 'frame clear')
  add(svg, 'rect', { class: 'target dark', x: 637, y: 118, width: 15, height: 14 })
  add(svg, 'circle', { class: 'measured', cx: 638, cy: 125, r: 5, fill: '#bfbfbf' })
  add(svg, 'circle', { class: 'measured', cx: 642, cy: 122, r: 5, fill: '#ffffff' })
  add(svg, 'rect', { x: 485, y: 498, width: 290, height: 27, fill: '#303030' })
  label(svg, 486, 519, 'Gamut Coverage:\u00a0 97,3%', 'start', 'coverage')
}

drawDeltaE($('#deltaE'))
$$('.delta').forEach(drawDelta)
drawRgb($('#rgb'))
drawGamut($('#gamut'))
drawCie($('#cie'))
```
